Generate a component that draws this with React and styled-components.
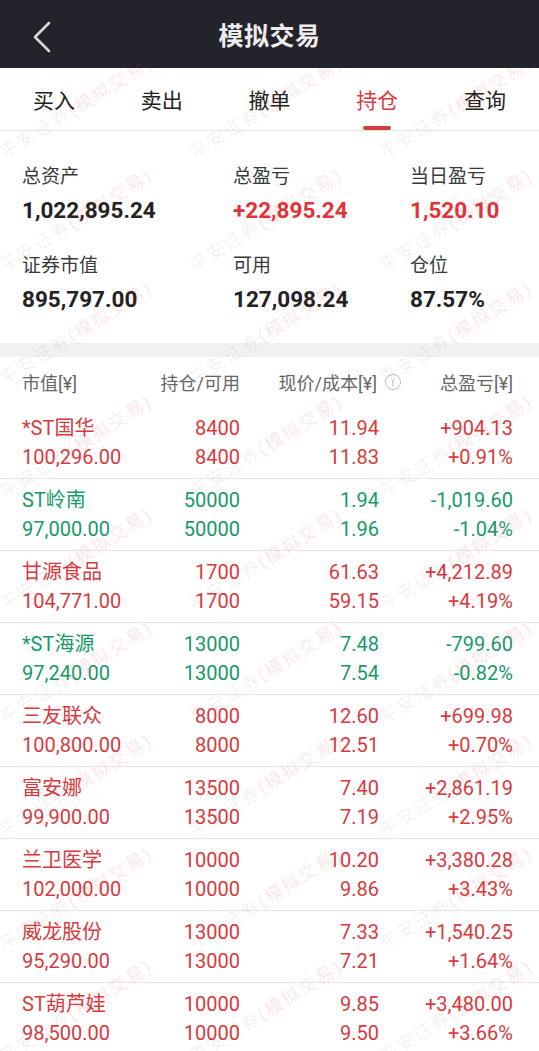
import styled, { createGlobalStyle } from "styled-components";

const GlobalStyle = createGlobalStyle`
  html, body {
    margin: 0;
    padding: 0;
    background: #fff;
  }
  body {
    font-family: "Roboto", "Noto Sans CJK SC", sans-serif;
    -webkit-font-smoothing: antialiased;
  }
`;

const RED = "#d83a3e";
const GREEN = "#17996b";

const Page = styled.div`
  position: relative;
  width: 539px;
  height: 1051px;
  overflow: hidden;
  background: #fff;
`;

const TopBar = styled.header`
  position: relative;
  z-index: 2;
  height: 68px;
  background: #22232b;
  display: flex;
  align-items: center;
  justify-content: center;
`;

const BackButton = styled.button`
  position: absolute;
  left: 28px;
  top: 18px;
  width: 30px;
  height: 36px;
  padding: 0;
  border: 0;
  background: transparent;
  cursor: pointer;
`;

const Title = styled.h1`
  margin: 0;
  color: #ececec;
  font-size: 25px;
  font-weight: 700;
  letter-spacing: 0.5px;
`;

const Tabs = styled.nav`
  display: flex;
  height: 62px;
  border-bottom: 1px solid #e6e6e6;
`;

const Tab = styled.div`
  position: relative;
  flex: 1;
  display: flex;
  align-items: center;
  justify-content: center;
  font-size: 21px;
  color: ${(p) => (p.$active ? RED : "#222")};
  &::after {
    content: "";
    display: ${(p) => (p.$active ? "block" : "none")};
    position: absolute;
    bottom: 0;
    left: 50%;
    width: 28px;
    height: 4px;
    margin-left: -14px;
    border-radius: 2px;
    background: ${RED};
  }
`;

const Summary = styled.section`
  display: grid;
  grid-template-columns: 211px 177px 1fr;
  row-gap: 28px;
  padding: 33px 0 29px 22px;
`;

const Stat = styled.div`
  display: flex;
  flex-direction: column;
  gap: 5px;
`;

const StatLabel = styled.div`
  font-size: 19px;
  line-height: 26px;
  color: #3a3a3a;
`;

const StatValue = styled.div`
  font-size: 22.5px;
  line-height: 30px;
  font-weight: 700;
  color: ${(p) => p.$color || "#222"};
`;

const Band = styled.div`
  height: 14px;
  background: #f1f1f3;
`;

const Grid = styled.div`
  display: grid;
  grid-template-columns: 130px 88px 139px 1fr;
  padding: 0 26px 0 22px;
`;

const HeadRow = styled(Grid)`
  height: 50px;
  align-items: center;
  font-size: 18px;
  color: #666;
`;

const HeadCell = styled.div`
  display: flex;
  align-items: center;
  justify-content: ${(p) => (p.$left ? "flex-start" : "flex-end")};
`;

const InfoIcon = styled.span`
  display: inline-flex;
  align-items: center;
  justify-content: center;
  width: 14px;
  height: 14px;
  margin-left: 8px;
  margin-right: -22px;
  border: 1px solid #bdbdbd;
  border-radius: 50%;
  font-family: "Liberation Serif", serif;
  font-style: italic;
  font-size: 12px;
  line-height: 1;
  color: #bdbdbd;
`;

const Row = styled(Grid)`
  padding-top: 7px;
  padding-bottom: 6px;
  border-bottom: 1px solid #e6e6e6;
  font-size: 20px;
  line-height: 29px;
  color: ${(p) => (p.$down ? GREEN : RED)};
`;

const Cell = styled.div`
  display: flex;
  flex-direction: column;
  align-items: ${(p) => (p.$left ? "flex-start" : "flex-end")};
  white-space: nowrap;
`;

const Watermark = styled.div`
  position: absolute;
  top: 68px;
  left: 0;
  right: 0;
  bottom: 0;
  z-index: 1;
  pointer-events: none;
  overflow: hidden;
`;

const Mark = styled.span`
  position: absolute;
  transform-origin: 0 100%;
  transform: rotate(-32deg);
  font-size: 18px;
  line-height: 20px;
  letter-spacing: 2px;
  white-space: nowrap;
  color: rgba(0, 0, 0, 0.065);
  & b {
    font-weight: 400;
    color: rgba(225, 40, 40, 0.12);
  }
`;

const summary = [
  { label: "总资产", value: "1,022,895.24" },
  { label: "总盈亏", value: "+22,895.24", color: "#e23339" },
  { label: "当日盈亏", value: "1,520.10", color: "#e23339" },
  { label: "证券市值", value: "895,797.00" },
  { label: "可用", value: "127,098.24" },
  { label: "仓位", value: "87.57%" },
];

const holdings = [
  ["*ST国华", "100,296.00", "8400", "11.94", "11.83", "+904.13", "+0.91%"],
  ["ST岭南", "97,000.00", "50000", "1.94", "1.96", "-1,019.60", "-1.04%"],
  ["甘源食品", "104,771.00", "1700", "61.63", "59.15", "+4,212.89", "+4.19%"],
  ["*ST海源", "97,240.00", "13000", "7.48", "7.54", "-799.60", "-0.82%"],
  ["三友联众", "100,800.00", "8000", "12.60", "12.51", "+699.98", "+0.70%"],
  ["富安娜", "99,900.00", "13500", "7.40", "7.19", "+2,861.19", "+2.95%"],
  ["兰卫医学", "102,000.00", "10000", "10.20", "9.86", "+3,380.28", "+3.43%"],
  ["威龙股份", "95,290.00", "13000", "7.33", "7.21", "+1,540.25", "+1.64%"],
  ["ST葫芦娃", "98,500.00", "10000", "9.85", "9.50", "+3,480.00", "+3.66%"],
];

const tabs = ["买入", "卖出", "撤单", "持仓", "查询"];

const marks = [];
for (let j = 0; j < 9; j++) {
  for (let i = 0; i < 3; i++) {
    marks.push({ x: 7 + 190 * i, y: 95 + 113 * j - 20 });
  }
}

export default function App() {
  return (
    <Page>
      <GlobalStyle />
      <TopBar>
        <BackButton aria-label="返回">
          <svg width="30" height="36" viewBox="0 0 30 36">
            <path
              d="M21 5 L7 19 L21 33"
              fill="none"
              stroke="#d8d8d8"
              strokeWidth="2.6"
              strokeLinecap="round"
              strokeLinejoin="round"
            />
          </svg>
        </BackButton>
        <Title>模拟交易</Title>
      </TopBar>

      <Tabs>
        {tabs.map((t) => (
          <Tab key={t} $active={t === "持仓"}>
            {t}
          </Tab>
        ))}
      </Tabs>

      <Summary>
        {summary.map((s) => (
          <Stat key={s.label}>
            <StatLabel>{s.label}</StatLabel>
            <StatValue $color={s.color}>{s.value}</StatValue>
          </Stat>
        ))}
      </Summary>

      <Band />

      <HeadRow>
        <HeadCell $left>市值[¥]</HeadCell>
        <HeadCell>持仓/可用</HeadCell>
        <HeadCell>
          现价/成本[¥]
          <InfoIcon>i</InfoIcon>
        </HeadCell>
        <HeadCell>总盈亏[¥]</HeadCell>
      </HeadRow>

      {holdings.map((h) => (
        <Row key={h[0]} $down={h[5].startsWith("-")}>
          <Cell $left>
            <span>{h[0]}</span>
            <span>{h[1]}</span>
          </Cell>
          <Cell>
            <span>{h[2]}</span>
            <span>{h[2]}</span>
          </Cell>
          <Cell>
            <span>{h[3]}</span>
            <span>{h[4]}</span>
          </Cell>
          <Cell>
            <span>{h[5]}</span>
            <span>{h[6]}</span>
          </Cell>
        </Row>
      ))}

      <Watermark>
        {marks.map((m, k) => (
          <Mark key={k} style={{ left: m.x, top: m.y }}>
            平安证券<b>(模拟交易)</b>
          </Mark>
        ))}
      </Watermark>
    </Page>
  );
}
